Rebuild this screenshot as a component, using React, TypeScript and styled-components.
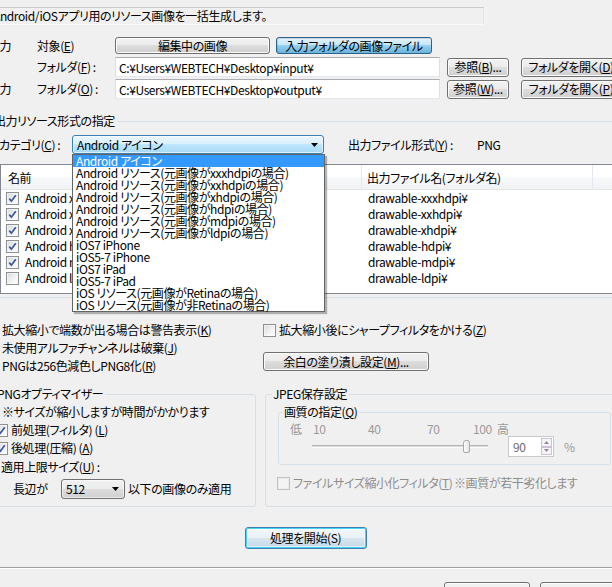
import styled, { createGlobalStyle, css } from 'styled-components'

const GlobalStyle = createGlobalStyle`
  html, body { margin: 0; padding: 0; background: #f0f0f0; overflow: hidden; }
  body {
    font-family: "Noto Sans CJK JP", "Noto Sans", sans-serif;
    font-size: 12px;
    color: #000;
  }
  * { box-sizing: border-box; }
`

const Window = styled.div`
  width: 635px;
  margin-left: -12px;
  padding-top: 7px;
  line-height: 16px;
  letter-spacing: -0.4px;
  font-feature-settings: "palt" 1;
  white-space: nowrap;
`

const Description = styled.div`
  margin-left: 2px;
  width: 494px;
  height: 18px;
  padding-left: 2px;
  border: 1px solid #c9c9c9;
  border-right-color: #e4e4e4;
  border-bottom-color: #fafafa;
  line-height: 16px;
`

const FormRow = styled.div<{ $top: number; $h: number }>`
  display: flex;
  align-items: center;
  margin-top: ${p => p.$top}px;
  height: ${p => p.$h}px;
`

const SectionLabel = styled.span`
  flex: none;
  width: 49px;
`

const FieldLabel = styled.span`
  flex: none;
  width: 78px;
`

const Key = styled.span`
  text-decoration: underline;
  text-underline-offset: 1px;
`

const skins = {
  normal: css`
    border-color: #707070;
    background: linear-gradient(#f2f2f2 0%, #ebebeb 49%, #dddddd 50%, #cfcfcf 100%);
    box-shadow: inset 0 0 0 1px #fcfcfc;
  `,
  pressed: css`
    border-color: #2c628b;
    background: linear-gradient(#e5f4fc 0%, #c4e5f6 49%, #98d1ef 50%, #68b3db 100%);
    box-shadow: inset 1px 1px 0 rgba(0, 0, 0, 0.12);
  `,
  focus: css`
    border-color: #3c7fb1;
    background: linear-gradient(#f4f8fb 0%, #e8f0f6 49%, #d9e6ef 50%, #c6d9e7 100%);
    box-shadow: inset 0 0 0 1px #48d4f8, inset 0 0 0 2px rgba(255, 255, 255, 0.45);
  `,
}

const Button = styled.button<{ $w: number; $h: number; $ml?: number; $mt?: number; $skin?: keyof typeof skins }>`
  flex: none;
  width: ${p => p.$w}px;
  height: ${p => p.$h}px;
  margin: ${p => p.$mt ?? 0}px 0 0 ${p => p.$ml ?? 0}px;
  padding: 0;
  border: 1px solid;
  border-radius: 3px;
  font-family: inherit;
  font-size: 12px;
  font-feature-settings: inherit;
  letter-spacing: inherit;
  color: #000;
  line-height: 1;
  ${p => skins[p.$skin ?? 'normal']}
`

const TextField = styled.input`
  flex: none;
  width: 325px;
  height: 20px;
  margin: 0;
  padding: 0 0 0 3px;
  border: 1px solid #dbdfe6;
  border-top-color: #abadb3;
  border-bottom-color: #e3e9ef;
  background: #fff;
  font-family: inherit;
  font-size: 12px;
  letter-spacing: inherit;
  color: #000;
  outline: none;
`

const Group = styled.fieldset`
  margin: 0;
  min-width: 0;
  border: 1px solid #d5dfe5;
  border-radius: 3px;
`

const Caption = styled.legend`
  padding: 0 2px 0 1px;
  line-height: 14px;
`

const OutputGroup = styled(Group)`
  margin-top: 15px;
  padding: 7px 0 3px 4px;
`

const CategoryRow = styled.div`
  display: flex;
  align-items: center;
  height: 19px;
  padding-left: 6px;
`

const CategoryLabel = styled.span`
  flex: none;
  width: 73px;
`

const SelectWrap = styled.div`
  position: relative;
  flex: none;
`

const Select = styled.div<{ $w: number; $h: number; $hover?: boolean }>`
  display: flex;
  align-items: center;
  justify-content: space-between;
  width: ${p => p.$w}px;
  height: ${p => p.$h}px;
  padding: 0 5px 0 4px;
  border: 1px solid ${p => (p.$hover ? '#3c7fb1' : '#707070')};
  border-radius: 3px;
  background: ${p =>
    p.$hover
      ? 'linear-gradient(#eaf6fd 0%, #d9f0fc 49%, #bee6fd 50%, #a7d9f5 100%)'
      : 'linear-gradient(#f2f2f2 0%, #ebebeb 49%, #dddddd 50%, #cfcfcf 100%)'};
  box-shadow: inset 0 0 0 1px rgba(255, 255, 255, 0.6);
`

const DropList = styled.ul`
  position: absolute;
  top: 100%;
  left: 0;
  z-index: 5;
  width: 253px;
  margin: 0;
  padding: 0;
  list-style: none;
  border: 1px solid #646464;
  background: #fff;
  box-shadow: 2px 2px 1px rgba(0, 0, 0, 0.28);
`

const DropItem = styled.li<{ $active?: boolean }>`
  height: 12px;
  padding-left: 3px;
  line-height: 12px;
  background: ${p => (p.$active ? '#3399ff' : 'transparent')};
  color: ${p => (p.$active ? '#fff' : '#000')};
`

const FormatLabel = styled.span`
  flex: none;
  width: 129px;
  margin-left: 24px;
`

const ListView = styled.div`
  margin: 10px 0 0 7px;
  height: 130px;
  border: 1px solid #828790;
  background: #fff;
`

const ListHeader = styled.div`
  display: flex;
  height: 25px;
  border-bottom: 1px solid #e5e5e5;
  background: linear-gradient(#ffffff 0%, #ffffff 45%, #f7f8f9 55%, #f1f2f4 100%);
`

const HeaderCell = styled.div<{ $w: number; $pl: number }>`
  flex: none;
  width: ${p => p.$w}px;
  padding-left: ${p => p.$pl}px;
  border-right: 1px solid #e3e8ee;
  line-height: 26px;
`

const ListRow = styled.div`
  display: flex;
  align-items: center;
  height: 16px;
`

const NameCell = styled.div`
  display: flex;
  align-items: center;
  gap: 6px;
  flex: none;
  width: 361px;
  padding-left: 5px;
`

const OutCell = styled.div`
  padding-left: 6px;
`

const Box = styled.span<{ $disabled?: boolean }>`
  display: inline-flex;
  align-items: center;
  justify-content: center;
  flex: none;
  width: 13px;
  height: 13px;
  border: 1px solid ${p => (p.$disabled ? '#c2c2c2' : '#8e8f8f')};
  background: ${p => (p.$disabled ? '#f4f4f4' : 'linear-gradient(135deg, #d6d9dd 0%, #f4f4f4 60%, #ffffff 100%)')};
  box-shadow: inset 0 0 0 1px ${p => (p.$disabled ? '#ececec' : 'rgba(255,255,255,0.5)')};
`

function CheckBox({ checked, disabled }: { checked?: boolean; disabled?: boolean }) {
  return (
    <Box $disabled={disabled}>
      {checked && (
        <svg width="9" height="9" viewBox="0 0 9 9">
          <path d="M1.3 4.6 L3.4 7.2 L7.8 1.2" fill="none" stroke="#3d56a0" strokeWidth="1.7" />
        </svg>
      )}
    </Box>
  )
}

const Arrow = () => (
  <svg width="7" height="4" viewBox="0 0 7 4">
    <path d="M0 0h7L3.5 4z" fill="#000" />
  </svg>
)

const OptionsRow = styled.div`
  display: flex;
  margin-top: 23px;
`

const OptionsLeft = styled.div`
  flex: none;
  width: 275px;
  padding-left: 14px;
  line-height: 18px;
`

const OptionsRight = styled.div`
  display: flex;
  flex-direction: column;
`

const CheckRow = styled.div<{ $ml?: number; $mt?: number; $disabled?: boolean }>`
  display: flex;
  align-items: center;
  gap: 3px;
  height: 18px;
  margin: ${p => p.$mt ?? 0}px 0 0 ${p => p.$ml ?? 0}px;
  color: ${p => (p.$disabled ? '#8d8d8d' : '#000')};
`

const GroupsRow = styled.div`
  display: flex;
  gap: 9px;
  margin-top: 12px;
`

const PngGroup = styled(Group)`
  flex: none;
  width: 268px;
  padding: 2px 0 7px 7px;
`

const JpegGroup = styled(Group)`
  flex: 1;
  padding: 0 0 0 6px;
`

const Line = styled.div<{ $ml?: number; $h?: number }>`
  height: ${p => p.$h ?? 18}px;
  margin-left: ${p => p.$ml ?? 0}px;
  line-height: ${p => p.$h ?? 18}px;
`

const SizeRow = styled.div`
  display: flex;
  align-items: center;
  height: 20px;
  margin: 3px 0 0 17px;
`

const SizeLabel = styled.span`
  flex: none;
  width: 48px;
`

const SizeNote = styled.span`
  margin-left: 3px;
`

const QualityGroup = styled(Group)`
  width: 333px;
  margin: 4px 0 0 6px;
  padding: 3px 0 7px 4px;
`

const ScaleRow = styled.div`
  display: flex;
  height: 14px;
  margin-left: 7px;
  line-height: 14px;
  color: #9a9a9a;
`

const Tick = styled.span<{ $w: number }>`
  flex: none;
  width: ${p => p.$w}px;
`

const SliderRow = styled.div`
  display: flex;
  align-items: center;
  height: 21px;
`

const Track = styled.div`
  position: relative;
  flex: none;
  width: 176px;
  height: 3px;
  margin-left: 29px;
  border-top: 1px solid #b4b4b4;
  border-bottom: 1px solid #fbfbfb;
  background: #dcdcdc;
`

const Thumb = styled.span`
  position: absolute;
  left: 151px;
  top: -6px;
  width: 7px;
  height: 13px;
  border: 1px solid #a9a9a9;
  border-radius: 3px 3px 2px 2px;
  background: linear-gradient(90deg, #fafafa, #e6e6e6);
`

const SpinBox = styled.div`
  display: flex;
  flex: none;
  width: 46px;
  height: 21px;
  margin-left: 20px;
  padding: 1px;
  border: 1px solid #c9c9c9;
  background: #fff;
`

const SpinValue = styled.span`
  flex: 1;
  padding-left: 3px;
  line-height: 17px;
  color: #6d6d6d;
`

const SpinButtons = styled.div`
  display: flex;
  flex-direction: column;
  width: 11px;
`

const SpinButton = styled.span`
  display: flex;
  flex: 1;
  align-items: center;
  justify-content: center;
  border: 1px solid #cdbfdc;
  background: #f6f4f9;
`

const Percent = styled.span`
  margin-left: 10px;
  color: #9a9a9a;
`

const FilterText = styled.span`
  flex: none;
  width: 158px;
`

const StartBar = styled.div`
  display: flex;
  justify-content: center;
  margin-top: 20px;
`

const Separator = styled.div`
  margin-top: 18px;
  border-top: 1px solid #a0a0a0;
  border-bottom: 1px solid #fff;
`

const BottomBar = styled.div`
  display: flex;
  gap: 10px;
  margin-top: 13px;
  padding-left: 456px;
`

const categories = [
  'Android アイコン',
  'Android リソース(元画像がxxxhdpiの場合)',
  'Android リソース(元画像がxxhdpiの場合)',
  'Android リソース(元画像がxhdpiの場合)',
  'Android リソース(元画像がhdpiの場合)',
  'Android リソース(元画像がmdpiの場合)',
  'Android リソース(元画像がldpiの場合)',
  'iOS7 iPhone',
  'iOS5-7 iPhone',
  'iOS7 iPad',
  'iOS5-7 iPad',
  'iOS リソース(元画像がRetinaの場合)',
  'iOS リソース(元画像が非Retinaの場合)',
]

const densities = ['xxxhdpi', 'xxhdpi', 'xhdpi', 'hdpi', 'mdpi', 'ldpi']

export default function App() {
  return (
    <>
      <GlobalStyle />
      <Window>
        <Description>Android/iOSアプリ用のリソース画像を一括生成します。</Description>

        <FormRow $top={12} $h={17}>
          <SectionLabel>入力</SectionLabel>
          <FieldLabel>対象(<Key>E</Key>)</FieldLabel>
          <Button $w={155} $h={17}>編集中の画像</Button>
          <Button $w={156} $h={17} $ml={6} $skin="pressed">入力フォルダの画像ファイル</Button>
        </FormRow>
        <FormRow $top={3} $h={20}>
          <SectionLabel />
          <FieldLabel>フォルダ(<Key>F</Key>) :</FieldLabel>
          <TextField readOnly value="C:¥Users¥WEBTECH¥Desktop¥input¥" />
          <Button $w={62} $h={19} $ml={7}>参照(<Key>B</Key>)...</Button>
          <Button $w={100} $h={19} $ml={12}>フォルダを開く(<Key>D</Key>)</Button>
        </FormRow>
        <FormRow $top={2} $h={20}>
          <SectionLabel>出力</SectionLabel>
          <FieldLabel>フォルダ(<Key>O</Key>) :</FieldLabel>
          <TextField readOnly value="C:¥Users¥WEBTECH¥Desktop¥output¥" />
          <Button $w={62} $h={19} $ml={7}>参照(<Key>W</Key>)...</Button>
          <Button $w={100} $h={19} $ml={12}>フォルダを開く(<Key>P</Key>)</Button>
        </FormRow>

        <OutputGroup>
          <Caption>出力リソース形式の指定</Caption>
          <CategoryRow>
            <CategoryLabel>カテゴリ(<Key>C</Key>) :</CategoryLabel>
            <SelectWrap>
              <Select $w={252} $h={19} $hover>
                <span>Android アイコン</span>
                <Arrow />
              </Select>
              <DropList>
                {categories.map((c, i) => (
                  <DropItem key={c} $active={i === 0}>{c}</DropItem>
                ))}
              </DropList>
            </SelectWrap>
            <FormatLabel>出力ファイル形式(<Key>Y</Key>) :</FormatLabel>
            <span>PNG</span>
          </CategoryRow>
          <ListView>
            <ListHeader>
              <HeaderCell $w={361} $pl={7}>名前</HeaderCell>
              <HeaderCell $w={231} $pl={5}>出力ファイル名(フォルダ名)</HeaderCell>
            </ListHeader>
            {densities.map((d, i) => (
              <ListRow key={d}>
                <NameCell>
                  <CheckBox checked={i < 5} />
                  <span>Android {d}</span>
                </NameCell>
                <OutCell>drawable-{d}¥</OutCell>
              </ListRow>
            ))}
          </ListView>
        </OutputGroup>

        <OptionsRow>
          <OptionsLeft>
            <div>拡大縮小で端数が出る場合は警告表示(<Key>K</Key>)</div>
            <div>未使用アルファチャンネルは破棄(<Key>J</Key>)</div>
            <div>PNGは256色減色しPNG8化(<Key>R</Key>)</div>
          </OptionsLeft>
          <OptionsRight>
            <CheckRow>
              <CheckBox />
              <span>拡大縮小後にシャープフィルタをかける(<Key>Z</Key>)</span>
            </CheckRow>
            <Button $w={166} $h={19} $mt={13}>
              余白の塗り潰し設定(<Key>M</Key>)...
            </Button>
          </OptionsRight>
        </OptionsRow>

        <GroupsRow>
          <PngGroup>
            <Caption>PNGオプティマイザー</Caption>
            <Line $ml={6}>※サイズが縮小しますが時間がかかります</Line>
            <CheckRow $ml={-1}>
              <CheckBox checked />
              <span>前処理(フィルタ) (<Key>L</Key>)</span>
            </CheckRow>
            <CheckRow $ml={-1}>
              <CheckBox checked />
              <span>後処理(圧縮) (<Key>A</Key>)</span>
            </CheckRow>
            <Line $ml={5} $h={19}>適用上限サイズ(<Key>U</Key>) :</Line>
            <SizeRow>
              <SizeLabel>長辺が</SizeLabel>
              <Select $w={64} $h={20}>
                <span>512</span>
                <Arrow />
              </Select>
              <SizeNote>以下の画像のみ適用</SizeNote>
            </SizeRow>
          </PngGroup>

          <JpegGroup>
            <Caption>JPEG保存設定</Caption>
            <QualityGroup>
              <Caption>画質の指定(<Key>Q</Key>)</Caption>
              <ScaleRow>
                <Tick $w={23}>低</Tick>
                <Tick $w={55}>10</Tick>
                <Tick $w={59}>40</Tick>
                <Tick $w={46}>70</Tick>
                <Tick $w={24}>100</Tick>
                <Tick $w={14}>高</Tick>
              </ScaleRow>
              <SliderRow>
                <Track>
                  <Thumb />
                </Track>
                <SpinBox>
                  <SpinValue>90</SpinValue>
                  <SpinButtons>
                    <SpinButton>
                      <svg width="5" height="3" viewBox="0 0 5 3"><path d="M0 3h5L2.5 0z" fill="#8f86a0" /></svg>
                    </SpinButton>
                    <SpinButton>
                      <svg width="5" height="3" viewBox="0 0 5 3"><path d="M0 0h5L2.5 3z" fill="#8f86a0" /></svg>
                    </SpinButton>
                  </SpinButtons>
                </SpinBox>
                <Percent>%</Percent>
              </SliderRow>
            </QualityGroup>
            <CheckRow $ml={5} $mt={9} $disabled>
              <CheckBox disabled />
              <FilterText>ファイルサイズ縮小化フィルタ(<Key>T</Key>)</FilterText>
              <span>※画質が若干劣化します</span>
            </CheckRow>
          </JpegGroup>
        </GroupsRow>

        <StartBar>
          <Button $w={122} $h={22} $skin="focus">処理を開始(S)</Button>
        </StartBar>
        <Separator />
        <BottomBar>
          <Button $w={86} $h={23} aria-label="閉じる" />
          <Button $w={86} $h={23} aria-label="ヘルプ" />
        </BottomBar>
      </Window>
    </>
  )
}
